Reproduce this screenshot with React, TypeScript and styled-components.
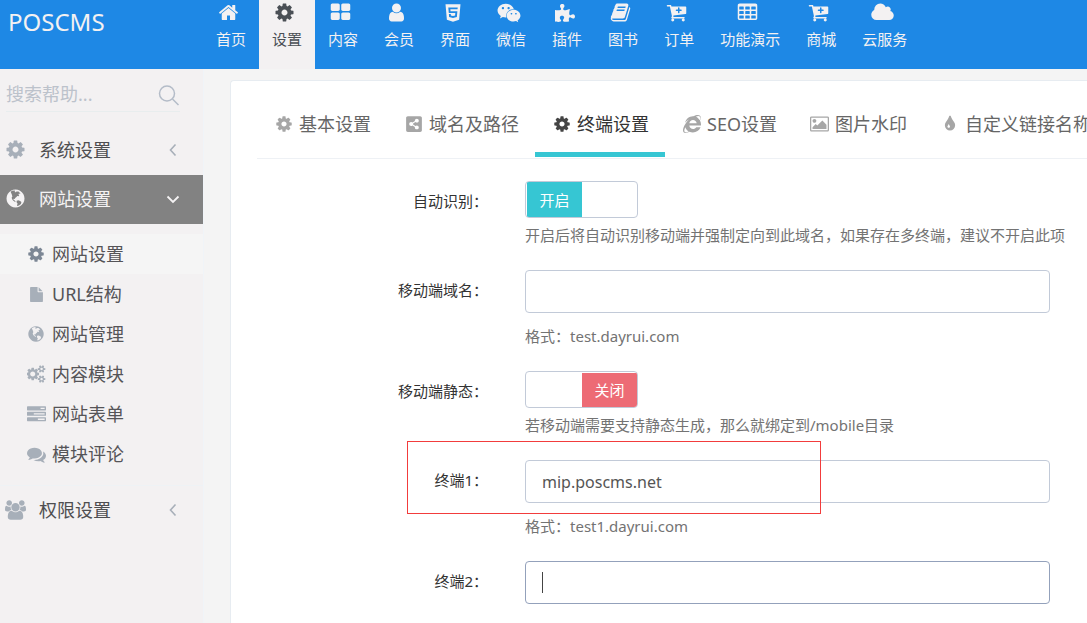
import React from "react";
import styled, { createGlobalStyle, css } from "styled-components";
import {
  FaHtml5,
  FaWeixin,
  FaPuzzlePiece,
  FaShareAltSquare,
  FaInternetExplorer,
} from "react-icons/fa";

const GlobalStyle = createGlobalStyle`
  * { box-sizing: border-box; }
  body {
    margin: 0;
    background: #f4f4f4;
    color: #333;
    font: 15px/22px "Noto Sans", "Noto Sans CJK SC", sans-serif;
    overflow-x: hidden;
  }
  ul { list-style: none; margin: 0; padding: 0; }
  a { color: inherit; text-decoration: none; }
  svg { display: block; }
`;

/* ---------- icons ---------- */

const glyphs: Record<string, { d: string; w?: number }> = {
  cog: {
    d: "M1152 896q0-106-75-181t-181-75-181 75-75 181 75 181 181 75 181-75 75-181zm512-109v222q0 12-8 23t-20 13l-185 28q-19 54-39 91 35 50 107 138 10 12 10 25t-9 23q-27 37-99 108t-94 71q-12 0-26-9l-138-108q-44 23-91 38-16 136-29 186-7 28-36 28h-222q-14 0-24.500-8.500t-11.500-21.500l-28-184q-49-16-90-37l-141 107q-10 9-25 9-14 0-25-11-126-114-165-168-7-10-7-23 0-12 8-23 15-21 51-66.500t54-70.500q-27-50-41-99l-183-27q-13-2-21-12.500t-8-23.500v-222q0-12 8-23t19-13l186-28q14-46 39-92-40-57-107-138-10-12-10-24 0-10 9-23 26-36 98.500-107.500t94.500-71.500q13 0 26 10l138 107q44-23 91-38 16-136 29-186 7-28 36-28h222q14 0 24.500 8.500t11.500 21.500l28 184q49 16 90 37l142-107q9-9 24-9 13 0 25 10 129 119 165 170 7 8 7 22 0 12-8 23-15 21-51 66.500t-54 70.500q26 50 41 98l183 28q13 2 21 12.500t8 23.500z",
  },
  cogs: {
    w: 1920,
    d: "M832 896q0-106-75-181t-181-75-181 75-75 181 75 181 181 75 181-75 75-181zm768 512q0-52-38-90t-90-38-90 38-38 90q0 53 37.500 90.500t90.500 37.500 90.500-37.500 37.500-90.500zm0-1024q0-52-38-90t-90-38-90 38-38 90q0 53 37.500 90.500t90.500 37.500 90.500-37.500 37.500-90.500zm-384 421v185q0 10-7 19.500t-16 10.500l-155 24q-11 35-32 76 34 48 90 115 7 11 7 20 0 12-7 19-23 30-82.500 89.500t-78.500 59.500q-11 0-21-7l-115-90q-37 19-77 31-11 108-23 155-7 24-30 24h-186q-11 0-20-7.500t-10-17.500l-23-153q-34-10-75-31l-118 89q-7 7-20 7-11 0-21-8-144-133-144-160 0-9 7-19 10-14 41-53t47-61q-23-44-35-82l-152-24q-10-1-17-9.500t-7-19.500v-185q0-10 7-19.500t16-10.500l155-24q11-35 32-76-34-48-90-115-7-11-7-20 0-12 7-20 22-30 82-89t79-59q11 0 21 7l115 90q34-18 77-32 11-108 23-154 7-24 30-24h186q11 0 20 7.500t10 17.500l23 153q34 10 75 31l118-89q8-7 20-7 11 0 21 8 144 133 144 160 0 8-7 19-12 16-42 54t-45 60q23 48 34 82l152 23q10 2 17 10.500t7 19.500zm640 533v140q0 16-149 31-12 27-30 52 51 113 51 138 0 4-4 7-122 71-124 71-8 0-46-47t-52-68q-20 2-30 2t-30-2q-14 21-52 68t-46 47q-2 0-124-71-4-3-4-7 0-25 51-138-18-25-30-52-149-15-149-31v-140q0-16 149-31 13-29 30-52-51-113-51-138 0-4 4-7 4-2 35-20t59-34 30-16q8 0 46 46.500t52 67.500q20-2 30-2t30 2q51-71 92-112l6-2q4 0 124 70 4 3 4 7 0 25-51 138 17 23 30 52 149 15 149 31zm0-1024v140q0 16-149 31-12 27-30 52 51 113 51 138 0 4-4 7-122 71-124 71-8 0-46-47t-52-68q-20 2-30 2t-30-2q-14 21-52 68t-46 47q-2 0-124-71-4-3-4-7 0-25 51-138-18-25-30-52-149-15-149-31v-140q0-16 149-31 13-29 30-52-51-113-51-138 0-4 4-7 4-2 35-20t59-34 30-16q8 0 46 46.500t52 67.500q20-2 30-2t30 2q51-71 92-112l6-2q4 0 124 70 4 3 4 7 0 25-51 138 17 23 30 52 149 15 149 31z",
  },
  home: {
    d: "M1472 992v480q0 26-19 45t-45 19h-384v-384h-256v384h-384q-26 0-45-19t-19-45v-480q0-1 .5-3t.5-3l575-474 575 474q1 2 1 6zm223-69l-62 74q-8 9-21 11h-3q-13 0-21-7l-692-577-692 577q-12 8-24 7-13-2-21-11l-62-74q-8-10-7-23.500t11-21.500l719-599q32-26 76-26t76 26l244 204v-195q0-14 9-23t23-9h192q14 0 23 9t9 23v408l219 182q10 8 11 21.500t-7 23.500z",
  },
  blocks: {
    d: "M832 1024v384q0 52-38 90t-90 38h-512q-52 0-90-38t-38-90v-384q0-52 38-90t90-38h512q52 0 90 38t38 90zm0-768v384q0 52-38 90t-90 38h-512q-52 0-90-38t-38-90v-384q0-52 38-90t90-38h512q52 0 90 38t38 90zm896 768v384q0 52-38 90t-90 38h-512q-52 0-90-38t-38-90v-384q0-52 38-90t90-38h512q52 0 90 38t38 90zm0-768v384q0 52-38 90t-90 38h-512q-52 0-90-38t-38-90v-384q0-52 38-90t90-38h512q52 0 90 38t38 90z",
  },
  user: {
    d: "M1536 1399q0 109-62.500 187t-150.500 78h-854q-88 0-150.500-78t-62.500-187q0-85 8.500-160.500t31.500-152 58.500-131 94-89 134.500-34.500q131 128 313 128t313-128q76 0 134.500 34.500t94 89 58.500 131 31.500 152 8.500 160.500zm-256-887q0 159-112.500 271.500t-271.500 112.500-271.500-112.500-112.500-271.500 112.500-271.500 271.500-112.500 271.500 112.500 112.500 271.500z",
  },
  book: {
    d: "M1703 478q40 57 18 129l-275 906q-19 64-76.500 107.500t-122.500 43.500h-923q-77 0-148.500-53.500t-99.500-131.500q-24-67-2-127 0-4 3-27t4-37q1-8-3-21.500t-3-19.500q2-11 8-21t16.500-23.500 16.500-23.500q23-38 45-91.500t30-91.500q3-10 .5-30t-.5-28q3-11 17-28t17-23q21-36 42-92t25-90q1-9-2.500-32t.5-28q4-13 22-30.500t22-22.500q19-26 42.500-84.500t27.500-96.500q1-8-3-25.500t-2-26.500q2-8 9-18t18-23 17-21q8-12 16.500-30.500t15-35 16-36 19.500-32 26.500-23.500 36-11.500 47.500 5.500l-1 3q38-9 51-9h761q74 0 114 56t18 130l-274 906q-36 119-71.500 153.500t-128.500 34.500h-869q-27 0-38 15-11 16-1 43 24 70 144 70h923q29 0 56-15.500t35-41.500l300-987q7-22 5-57 38 15 59 43zm-1064 2q-4 13 2 22.500t20 9.500h608q13 0 25.500-9.500t16.500-22.500l21-64q4-13-2-22.500t-20-9.500h-608q-13 0-25.500 9.500t-16.500 22.500zm-83 256q-4 13 2 22.500t20 9.500h608q13 0 25.500-9.500t16.500-22.500l21-64q4-13-2-22.500t-20-9.500h-608q-13 0-25.500 9.500t-16.500 22.500z",
  },
  cart: {
    d: "M704 1536q0 52-38 90t-90 38-90-38-38-90 38-90 90-38 90 38 38 90zm896 0q0 52-38 90t-90 38-90-38-38-90 38-90 90-38 90 38 38 90zm128-1088v512q0 24-16.500 42.500t-40.500 21.500l-1044 122q13 60 13 70 0 16-24 64h920q26 0 45 19t19 45-19 45-45 19h-1024q-26 0-45-19t-19-45q0-11 8-31.500t16-36 21.500-40 15.500-29.500l-177-823h-204q-26 0-45-19t-19-45 19-45 45-19h256q16 0 28.500 6.500t19.500 15.500 13 24.500 8 26 5.500 29.500 4.500 26h1201q26 0 45 19t19 45zM1344 704q0-26-19-45t-45-19h-128v-128q0-26-19-45t-45-19-45 19-19 45v128h-128q-26 0-45 19t-19 45 19 45 45 19h128v128q0 26 19 45t45 19 45-19 19-45v-128h128q26 0 45-19t19-45z",
  },
  table: {
    d: "M224 128h1344q66 0 113 47t47 113v1088q0 66-47 113t-113 47h-1344q-66 0-113-47t-47-113v-1088q0-66 47-113t113-47zM192 416v192q0 32 32 32h320q32 0 32-32v-192q0-32-32-32h-320q-32 0-32 32zM704 416v192q0 32 32 32h320q32 0 32-32v-192q0-32-32-32h-320q-32 0-32 32zM1216 416v192q0 32 32 32h320q32 0 32-32v-192q0-32-32-32h-320q-32 0-32 32zM192 800v192q0 32 32 32h320q32 0 32-32v-192q0-32-32-32h-320q-32 0-32 32zM704 800v192q0 32 32 32h320q32 0 32-32v-192q0-32-32-32h-320q-32 0-32 32zM1216 800v192q0 32 32 32h320q32 0 32-32v-192q0-32-32-32h-320q-32 0-32 32zM192 1184v192q0 32 32 32h320q32 0 32-32v-192q0-32-32-32h-320q-32 0-32 32zM704 1184v192q0 32 32 32h320q32 0 32-32v-192q0-32-32-32h-320q-32 0-32 32zM1216 1184v192q0 32 32 32h320q32 0 32-32v-192q0-32-32-32h-320q-32 0-32 32z",
  },
  cloud: {
    w: 1920,
    d: "M1920 1152q0 159-112.500 271.500t-271.500 112.500h-1088q-185 0-316.500-131.500t-131.500-316.500q0-132 71-241.500t187-163.500q-2-28-2-43 0-212 150-362t362-150q158 0 286.500 88t187.500 230q70-62 166-62 106 0 181 75t75 181q0 75-41 138 129 30 213 134.500t84 239.500z",
  },
  globe: {
    d: "M896 128q209 0 385.500 103t279.500 279.500 103 385.500-103 385.500-279.500 279.500-385.500 103-385.500-103-279.500-279.500-103-385.500 103-385.500 279.500-279.500 385.500-103zM480 330l130-90 190-34 80 60-70 70 110 30 60-70 170 10 110 90 60 120-120-40-70 60 90 70-60 90-120-20-60 100-90 60-70 110-100-20 20 90 100 60 70 110-80-20-140-100-90-130-30-120 60-100-40-150zM1000 1080l140-40 150 60 110 100-40 160-170 130-130 50-40-60 60-130-90-130z",
  },
  file: {
    d: "M1152 512v-472q22 14 36 28l408 408q14 14 28 36h-472zm-128 32q0 40 28 68t68 28h544v1056q0 40-28 68t-68 28h-1344q-40 0-68-28t-28-68v-1600q0-40 28-68t68-28h800v544z",
  },
  tasks: {
    d: "M1024 1408h640v-128h-640v128zM640 896h1024v-128h-1024v128zM1280 384h384v-128h-384v128zM1792 1216v256q0 26-19 45t-45 19h-1664q-26 0-45-19t-19-45v-256q0-26 19-45t45-19h1664q26 0 45 19t19 45zM1792 704v256q0 26-19 45t-45 19h-1664q-26 0-45-19t-19-45v-256q0-26 19-45t45-19h1664q26 0 45 19t19 45zM1792 192v256q0 26-19 45t-45 19h-1664q-26 0-45-19t-19-45v-256q0-26 19-45t45-19h1664q26 0 45 19t19 45z",
  },
  comments: {
    d: "M1408 768q0 139-94 257t-256.500 186.500-353.500 68.500q-86 0-176-16-124 88-278 128-36 9-86 16h-3q-11 0-20.500-8t-11.500-21q-1-3-1-6.500t.5-6.500 2-6l2.500-5 3.500-5.500 4-5 4.500-5 4-4.500q5-6 23-25t26-29.500 22.500-29 25-38.500 20.500-44q-124-72-195-177t-71-224q0-139 94-257t256.500-186.500 353.500-68.500 353.500 68.500 256.500 186.500 94 257zm384 256q0 120-71 224.500t-195 176.500q10 24 20.500 44t25 38.500 22.500 29 26 29.500 23 25q1 1 4 4.500t4.500 5 4 5 3.500 5.500l2.500 5 2 6 .5 6.500-1 6.500q-3 14-13 22t-22 7q-50-7-86-16-154-40-278-128-90 16-176 16-271 0-472-132 58 4 88 4 161 0 309-45t264-129q125-92 192-212t67-254q0-77-23-152 129 71 204 178t75 230z",
  },
  users: {
    w: 1920,
    d: "M593 896q-162 5-265 128h-134q-82 0-138-40.500t-56-118.500q0-353 124-353 6 0 43.500 21t97.500 42.500 119 21.500q67 0 133-23-5 37-5 66 0 139 81 256zm1071 637q0 120-73 189.500t-194 69.500h-874q-121 0-194-69.500t-73-189.500q0-53 3.500-103.500t14-109 26.500-108.500 43-97.500 62-81 85.500-53.500 111.500-20q10 0 43 21.500t73 48 107 48 135 21.500 135-21.500 107-48 73-48 43-21.500q61 0 111.500 20t85.500 53.500 62 81 43 97.500 26.500 108.500 14 109 3.500 103.500zm-1024-1277q0 106-75 181t-181 75-181-75-75-181 75-181 181-75 181 75 75 181zm704 384q0 159-112.500 271.500t-271.500 112.500-271.500-112.500-112.500-271.500 112.500-271.500 271.500-112.500 271.500 112.500 112.500 271.500zm576 225q0 78-56 118.500t-138 40.500h-134q-103-123-265-128 81-117 81-256 0-29-5-66 66 23 133 23 59 0 119-21.500t97.500-42.500 43.500-21q124 0 124 353zm-128-609q0 106-75 181t-181 75-181-75-75-181 75-181 181-75 181 75 75 181z",
  },
  picture: {
    w: 1920,
    d: "M640 576q0 80-56 136t-136 56-136-56-56-136 56-136 136-56 136 56 56 136zm1024 384v448h-1408v-192l320-320 160 160 512-512zm96-704h-1600q-13 0-22.500 9.500t-9.500 22.500v1216q0 13 9.500 22.500t22.500 9.500h1600q13 0 22.500-9.500t9.500-22.500v-1216q0-13-9.500-22.500t-22.500-9.500zm160 32v1216q0 66-47 113t-113 47h-1600q-66 0-113-47t-47-113v-1216q0-66 47-113t113-47h1600q66 0 113 47t47 113z",
  },
  tint: {
    d: "M896 1152q0-36-20-69-1-1-15.500-22.500t-25.500-38-25-44-21-50.500q-4-16-21-16t-21 16q-7 23-21 50.500t-25 44-25.500 38-15.500 22.500q-20 33-20 69 0 53 37.500 90.500t90.500 37.500 90.500-37.500 37.500-90.500zm512-128q0 212-150 362t-362 150-362-150-150-362q0-145 81-275 6-9 62.500-90.500t101-151 99.500-178 83-201.500q9-30 34-47t51-17 51.500 17 33.500 47q28 93 83 201.500t99.500 178 101 151 62.500 90.500q81 127 81 275z",
  },
};

const Glyph = ({ name, size }: { name: string; size: number }) => {
  const { d, w = 1792 } = glyphs[name];
  return (
    <svg
      aria-hidden="true"
      height={size}
      width={Math.round((size * w) / 1792)}
      viewBox={`0 0 ${w} 1792`}
      fill="currentColor"
      fillRule="evenodd"
    >
      <path d={d} />
    </svg>
  );
};

const IconBox = styled.span<{ $width: number }>`
  flex: none;
  display: flex;
  align-items: center;
  justify-content: center;
  width: ${(p) => p.$width}px;
`;

/* ---------- header ---------- */

const Header = styled.header`
  display: flex;
  height: 69px;
  background: #1e88e5;
  color: #f3f1f2;
`;

const Brand = styled.a`
  flex: none;
  width: 203px;
  padding: 6px 0 0 8px;
  font-size: 24px;
  line-height: 32px;
`;

const TopNav = styled.nav`
  display: flex;
  white-space: nowrap;
`;

const TopLink = styled.a<{ $active?: boolean }>`
  display: flex;
  flex-direction: column;
  align-items: center;
  padding: 2px 13px 0;
  ${(p) =>
    p.$active &&
    css`
      background: #f3f1f2;
      color: #4a4f55;
    `}
`;

const TopIcon = styled.span`
  display: flex;
  align-items: center;
  justify-content: center;
  width: 24px;
  height: 21px;
  margin: 0 5px 5px 0;
`;

/* ---------- sidebar ---------- */

const Shell = styled.div`
  display: flex;
  align-items: stretch;
  min-height: calc(100vh - 69px);
`;

const Sidebar = styled.aside`
  flex: none;
  width: 203px;
  background: #f3f1f2;
`;

const SearchForm = styled.form`
  display: flex;
  align-items: center;
  height: 43px;
  margin: 0 23px 14px 6px;
  padding-top: 8px;
  border-bottom: 1px solid #e8edee;
`;

const SearchInput = styled.input`
  flex: 1;
  min-width: 0;
  padding: 0;
  border: 0;
  background: none;
  font: 18px/26px "Noto Sans", "Noto Sans CJK SC", sans-serif;
  color: #555;
  &::placeholder {
    color: #bcc2cb;
    opacity: 1;
  }
`;

const SearchButton = styled.button`
  padding: 2px 0 0;
  border: 0;
  background: none;
  color: #b4bcc8;
`;

const MenuLink = styled.a<{ $active?: boolean }>`
  display: flex;
  align-items: center;
  height: 49px;
  padding: 0 23px 2px 4px;
  font-size: 18px;
  color: ${(p) => (p.$active ? "#f5f3f4" : "#4e4e50")};
  background: ${(p) => (p.$active ? "#828282" : "transparent")};

  ${IconBox} {
    margin-right: 13px;
    color: ${(p) => (p.$active ? "#f5f3f4" : "#a7afb9")};
  }
`;

const Chevron = styled.svg`
  margin-left: auto;
`;

const SubMenu = styled.ul`
  padding: 10px 0 11px;
  border-bottom: 1px solid #eef2f5;
`;

const SubLink = styled.a<{ $active?: boolean }>`
  display: flex;
  align-items: center;
  gap: 6px;
  height: 40px;
  padding-left: 26px;
  font-size: 18px;
  color: #555457;
  background: ${(p) => (p.$active ? "#f5f5f5" : "transparent")};

  ${IconBox} {
    color: ${(p) => (p.$active ? "#7c8795" : "#a7afb9")};
  }
`;

/* ---------- content ---------- */

const Main = styled.main`
  flex: 1;
  min-width: 0;
  padding: 11px 0 0 26px;
  overflow: hidden;
  border-left: 1px solid #f0f4f8;
`;

const Card = styled.section`
  min-height: 100%;
  padding: 17px 0 18px 26px;
  background: #fff;
  border: 1px solid #e7ecf1;
  border-width: 1px 0 0 1px;
  border-radius: 4px 0 0 0;
`;

const Tabs = styled.nav`
  display: flex;
  padding-bottom: 1px;
  white-space: nowrap;
  border-bottom: 1px solid #eef1f5;
`;

const Tab = styled.a<{ $active?: boolean }>`
  flex: none;
  display: flex;
  align-items: center;
  gap: 5px;
  height: 59px;
  padding: 0 16px 2px 17px;
  font-size: 18px;
  color: ${(p) => (p.$active ? "#333" : "#666")};
  border-bottom: 5px solid ${(p) => (p.$active ? "#36c6d3" : "transparent")};

  ${IconBox} {
    color: ${(p) => (p.$active ? "#444" : "#a6a6a6")};
  }
`;

const Form = styled.form`
  padding-top: 22px;
`;

const Row = styled.div`
  position: relative;
  display: flex;
  margin-bottom: 24px;
`;

const Label = styled.label`
  flex: none;
  width: 231px;
  padding-top: 9px;
  text-align: right;
  color: #333;
`;

const Field = styled.div`
  flex: 1;
  min-width: 0;
  margin-left: 37px;
  padding-right: 16px;
`;

const InputWrap = styled.div`
  position: relative;
  max-width: 525px;
`;

const TextInput = styled.input<{ $focused?: boolean }>`
  display: block;
  width: 100%;
  height: 43px;
  padding: 0 16px;
  border: 1px solid ${(p) => (p.$focused ? "#93a1bb" : "#c2cad8")};
  border-radius: 4px;
  background: #fff;
  color: #555;
  font: 16px/24px "Noto Sans", "Noto Sans CJK SC", sans-serif;
  outline: 0;
`;

const Caret = styled.span`
  position: absolute;
  left: 17px;
  top: 11px;
  width: 1px;
  height: 21px;
  background: #444;
`;

const Help = styled.p<{ $gap: number }>`
  margin: ${(p) => p.$gap}px 0 0;
  color: #737373;
`;

const SwitchInput = styled.input`
  position: absolute;
  opacity: 0;
  inset: 0;
  margin: 0;
`;

const SwitchFrame = styled.span<{ $on: boolean }>`
  position: relative;
  display: flex;
  justify-content: ${(p) => (p.$on ? "flex-start" : "flex-end")};
  width: 113px;
  height: 37px;
  padding: ${(p) => (p.$on ? "0 0 0 1px" : "1px 0 0 0")};
  border: 1px solid #c2cad8;
  border-radius: 4px;
  overflow: hidden;
`;

const SwitchHandle = styled.span<{ $on: boolean }>`
  display: flex;
  align-items: center;
  justify-content: center;
  width: 55px;
  color: #fff;
  background: ${(p) => (p.$on ? "#36c6d3" : "#ed6b75")};
`;

const Highlight = styled.span`
  position: absolute;
  left: 150px;
  top: -19px;
  width: 414px;
  height: 73px;
  border: 1px solid #f23c3c;
  pointer-events: none;
`;

const Switch = ({ id, on }: { id: string; on: boolean }) => (
  <SwitchFrame $on={on}>
    <SwitchInput id={id} type="checkbox" role="switch" defaultChecked={on} />
    <SwitchHandle $on={on}>{on ? "开启" : "关闭"}</SwitchHandle>
  </SwitchFrame>
);

/* ---------- data ---------- */

const topLinks: { label: string; icon: React.ReactNode; active?: boolean }[] = [
  { label: "首页", icon: <Glyph name="home" size={21} /> },
  { label: "设置", icon: <Glyph name="cog" size={21} />, active: true },
  { label: "内容", icon: <Glyph name="blocks" size={21} /> },
  { label: "会员", icon: <Glyph name="user" size={21} /> },
  { label: "界面", icon: <FaHtml5 size={20} /> },
  { label: "微信", icon: <FaWeixin size={24} /> },
  { label: "插件", icon: <FaPuzzlePiece size={20} /> },
  { label: "图书", icon: <Glyph name="book" size={21} /> },
  { label: "订单", icon: <Glyph name="cart" size={21} /> },
  { label: "功能演示", icon: <Glyph name="table" size={21} /> },
  { label: "商城", icon: <Glyph name="cart" size={21} /> },
  { label: "云服务", icon: <Glyph name="cloud" size={21} /> },
];

const subLinks: { label: string; icon: React.ReactNode; active?: boolean }[] = [
  { label: "网站设置", icon: <Glyph name="cog" size={18} />, active: true },
  { label: "URL结构", icon: <Glyph name="file" size={15} /> },
  { label: "网站管理", icon: <Glyph name="globe" size={18} /> },
  { label: "内容模块", icon: <Glyph name="cogs" size={18} /> },
  { label: "网站表单", icon: <Glyph name="tasks" size={19} /> },
  { label: "模块评论", icon: <Glyph name="comments" size={19} /> },
];

const tabs: { label: string; icon: React.ReactNode; active?: boolean }[] = [
  { label: "基本设置", icon: <Glyph name="cog" size={18} /> },
  { label: "域名及路径", icon: <FaShareAltSquare size={18} /> },
  { label: "终端设置", icon: <Glyph name="cog" size={18} />, active: true },
  { label: "SEO设置", icon: <FaInternetExplorer size={18} /> },
  { label: "图片水印", icon: <Glyph name="picture" size={18} /> },
  { label: "自定义链接名称", icon: <Glyph name="tint" size={18} /> },
];

const ChevronLeft = () => (
  <Chevron width="14" height="14" viewBox="0 0 14 14" fill="none" stroke="#a7afb9" strokeWidth="1.6">
    <path d="M9.500 1.500L4.500 7l5 5.500" />
  </Chevron>
);

const ChevronDown = () => (
  <Chevron width="14" height="14" viewBox="0 0 14 14" fill="none" stroke="#f5f3f4" strokeWidth="1.8">
    <path d="M1.500 4.500L7 10l5.500-5.500" />
  </Chevron>
);

export default function App() {
  return (
    <>
      <GlobalStyle />
      <Header>
        <Brand href="#">POSCMS</Brand>
        <TopNav>
          {topLinks.map((l) => (
            <TopLink key={l.label} href="#" $active={l.active}>
              <TopIcon>{l.icon}</TopIcon>
              {l.label}
            </TopLink>
          ))}
        </TopNav>
      </Header>
      <Shell>
        <Sidebar>
          <SearchForm>
            <SearchInput type="text" aria-label="搜索帮助" placeholder="搜索帮助..." />
            <SearchButton type="button" aria-label="搜索">
              <svg width="22" height="22" viewBox="0 0 22 22" fill="none" stroke="currentColor" strokeWidth="1.5">
                <circle cx="9" cy="9.500" r="7.500" />
                <path d="M14.500 15L20.500 21" />
              </svg>
            </SearchButton>
          </SearchForm>
          <ul>
            <li>
              <MenuLink href="#">
                <IconBox $width={22}><Glyph name="cog" size={21} /></IconBox>
                系统设置
                <ChevronLeft />
              </MenuLink>
            </li>
            <li>
              <MenuLink href="#" $active>
                <IconBox $width={22}><Glyph name="globe" size={21} /></IconBox>
                网站设置
                <ChevronDown />
              </MenuLink>
              <SubMenu>
                {subLinks.map((l) => (
                  <li key={l.label}>
                    <SubLink href="#" $active={l.active}>
                      <IconBox $width={20}>{l.icon}</IconBox>
                      {l.label}
                    </SubLink>
                  </li>
                ))}
              </SubMenu>
            </li>
            <li>
              <MenuLink href="#">
                <IconBox $width={22}><Glyph name="users" size={20} /></IconBox>
                权限设置
                <ChevronLeft />
              </MenuLink>
            </li>
          </ul>
        </Sidebar>
        <Main>
          <Card>
            <Tabs>
              {tabs.map((t) => (
                <Tab key={t.label} href="#" $active={t.active}>
                  <IconBox $width={20}>{t.icon}</IconBox>
                  {t.label}
                </Tab>
              ))}
            </Tabs>
            <Form>
              <Row>
                <Label htmlFor="auto">自动识别：</Label>
                <Field>
                  <Switch id="auto" on />
                  <Help $gap={6}>
                    开启后将自动识别移动端并强制定向到此域名，如果存在多终端，建议不开启此项
                  </Help>
                </Field>
              </Row>
              <Row>
                <Label htmlFor="domain">移动端域名：</Label>
                <Field>
                  <InputWrap>
                    <TextInput id="domain" type="text" />
                  </InputWrap>
                  <Help $gap={12}>格式：test.dayrui.com</Help>
                </Field>
              </Row>
              <Row>
                <Label htmlFor="static">移动端静态：</Label>
                <Field>
                  <Switch id="static" on={false} />
                  <Help $gap={6}>若移动端需要支持静态生成，那么就绑定到/mobile目录</Help>
                </Field>
              </Row>
              <Row>
                <Label htmlFor="t1">终端1：</Label>
                <Field>
                  <InputWrap>
                    <TextInput id="t1" type="text" defaultValue="mip.poscms.net" />
                  </InputWrap>
                  <Help $gap={12}>格式：test1.dayrui.com</Help>
                </Field>
                <Highlight />
              </Row>
              <Row>
                <Label htmlFor="t2">终端2：</Label>
                <Field>
                  <InputWrap>
                    <TextInput id="t2" type="text" $focused />
                    <Caret />
                  </InputWrap>
                </Field>
              </Row>
            </Form>
          </Card>
        </Main>
      </Shell>
    </>
  );
}
